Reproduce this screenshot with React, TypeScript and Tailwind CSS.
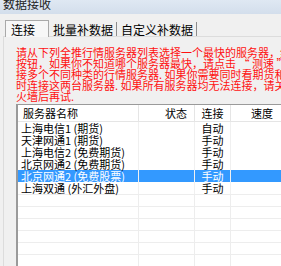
const rows = [
  { name: "上海电信1 (期货)", link: "自动" },
  { name: "天津网通1 (期货)", link: "手动" },
  { name: "上海电信2 (免费期货)", link: "手动" },
  { name: "北京网通2 (免费期货)", link: "手动" },
  { name: "北京网通2 (免费股票)", link: "手动", selected: true },
  { name: "上海双通 (外汇外盘)", link: "手动" },
];

const lines = [
  "请从下列全推行情服务器列表选择一个最快的服务器，然后点击“连接”",
  "按钮，如果你不知道哪个服务器最快，请点击 “ 测速 ” 按钮。如果",
  "接多个不同种类的行情服务器. 如果你需要同时看期货和股票，请同",
  "时连接这两台服务器. 如果所有服务器均无法连接，请关闭防",
  "火墙后再试.",
];

const App = () => {
  return (
    <div
      className="w-[281px] h-[266px] overflow-hidden bg-[#f0f0f0] text-[11px] leading-[11px] text-black flex flex-col"
      style={{ fontFamily: '"Noto Sans CJK SC", "Noto Sans", sans-serif' }}
    >
      {/* title bar */}
      <div className="h-[14px] shrink-0 bg-gradient-to-b from-[#dfe8f3] to-[#d3deec] pl-[3px] overflow-hidden">
        <div className="-mt-[3px] text-[12px] leading-[14px] text-[#222]">数据接收</div>
      </div>

      {/* tabs */}
      <div className="h-[22px] shrink-0 flex items-end pl-[5px] bg-[#f0f0f0]">
        <div className="h-[17px] w-[44px] border border-b-0 border-[#a9a9a9] bg-[#f7f7f7] flex items-center pl-[5px] text-[12px] relative top-[1px]">
          连接
        </div>
        <div className="h-[14px] flex items-center pl-[4px] pr-[3px] border-r border-[#8c8c8c] text-[12px]">
          批量补数据
        </div>
        <div className="h-[14px] flex items-center pl-[4px] pr-[3px] border-r border-[#8c8c8c] text-[12px]">
          自定义补数据
        </div>
      </div>

      {/* panel */}
      <div className="flex-1 ml-[3px] border-l border-t border-[#dcdcdc] bg-[#f0f0f0] pl-[12px] pt-[10px] flex flex-col">
        <div className="text-[#ff1010] leading-[11px] h-[57px]">
          {lines.map((l, i) => (
            <div key={i} className="whitespace-nowrap">{l}</div>
          ))}
        </div>

        {/* server list */}
        <div className="flex-1 border-l-2 border-t border-[#9a9a9a] bg-white w-[400px]">
          <div className="flex h-[17px] border-b border-[#e5e5e5] text-[11px] items-center">
            <div className="w-[121px] pl-[5px] border-r border-[#e5e5e5] h-full flex items-center">服务器名称</div>
            <div className="w-[56px] pr-[7px] border-r border-[#e5e5e5] h-full flex items-center justify-end">状态</div>
            <div className="w-[36px] border-r border-[#e5e5e5] h-full flex items-center justify-center">连接</div>
            <div className="w-[60px] pl-[20px] h-full flex items-center">速度</div>
          </div>
          {rows.map((r, i) => (
            <div
              key={i}
              className={`flex h-[12px] items-center ${r.selected ? "bg-[#3399ff] text-white" : ""}`}
            >
              <div className="w-[121px] pl-[3px] border-r border-[#f0f0f0] h-full flex items-center whitespace-nowrap">{r.name}</div>
              <div className="w-[56px] border-r border-[#f0f0f0] h-full"></div>
              <div className="w-[36px] border-r border-[#f0f0f0] h-full flex items-center justify-center">{r.link}</div>
              <div className="w-[60px] h-full"></div>
            </div>
          ))}
          {Array.from({ length: 7 }).map((_, i) => (
            <div key={i} className="flex h-[12px] border-t border-[#ededed]">
              <div className="w-[121px] border-r border-[#ededed] h-full"></div>
              <div className="w-[56px] border-r border-[#ededed] h-full"></div>
              <div className="w-[36px] border-r border-[#ededed] h-full"></div>
              <div className="w-[60px] h-full"></div>
            </div>
          ))}
        </div>
      </div>
    </div>
  );
};

export default App;
